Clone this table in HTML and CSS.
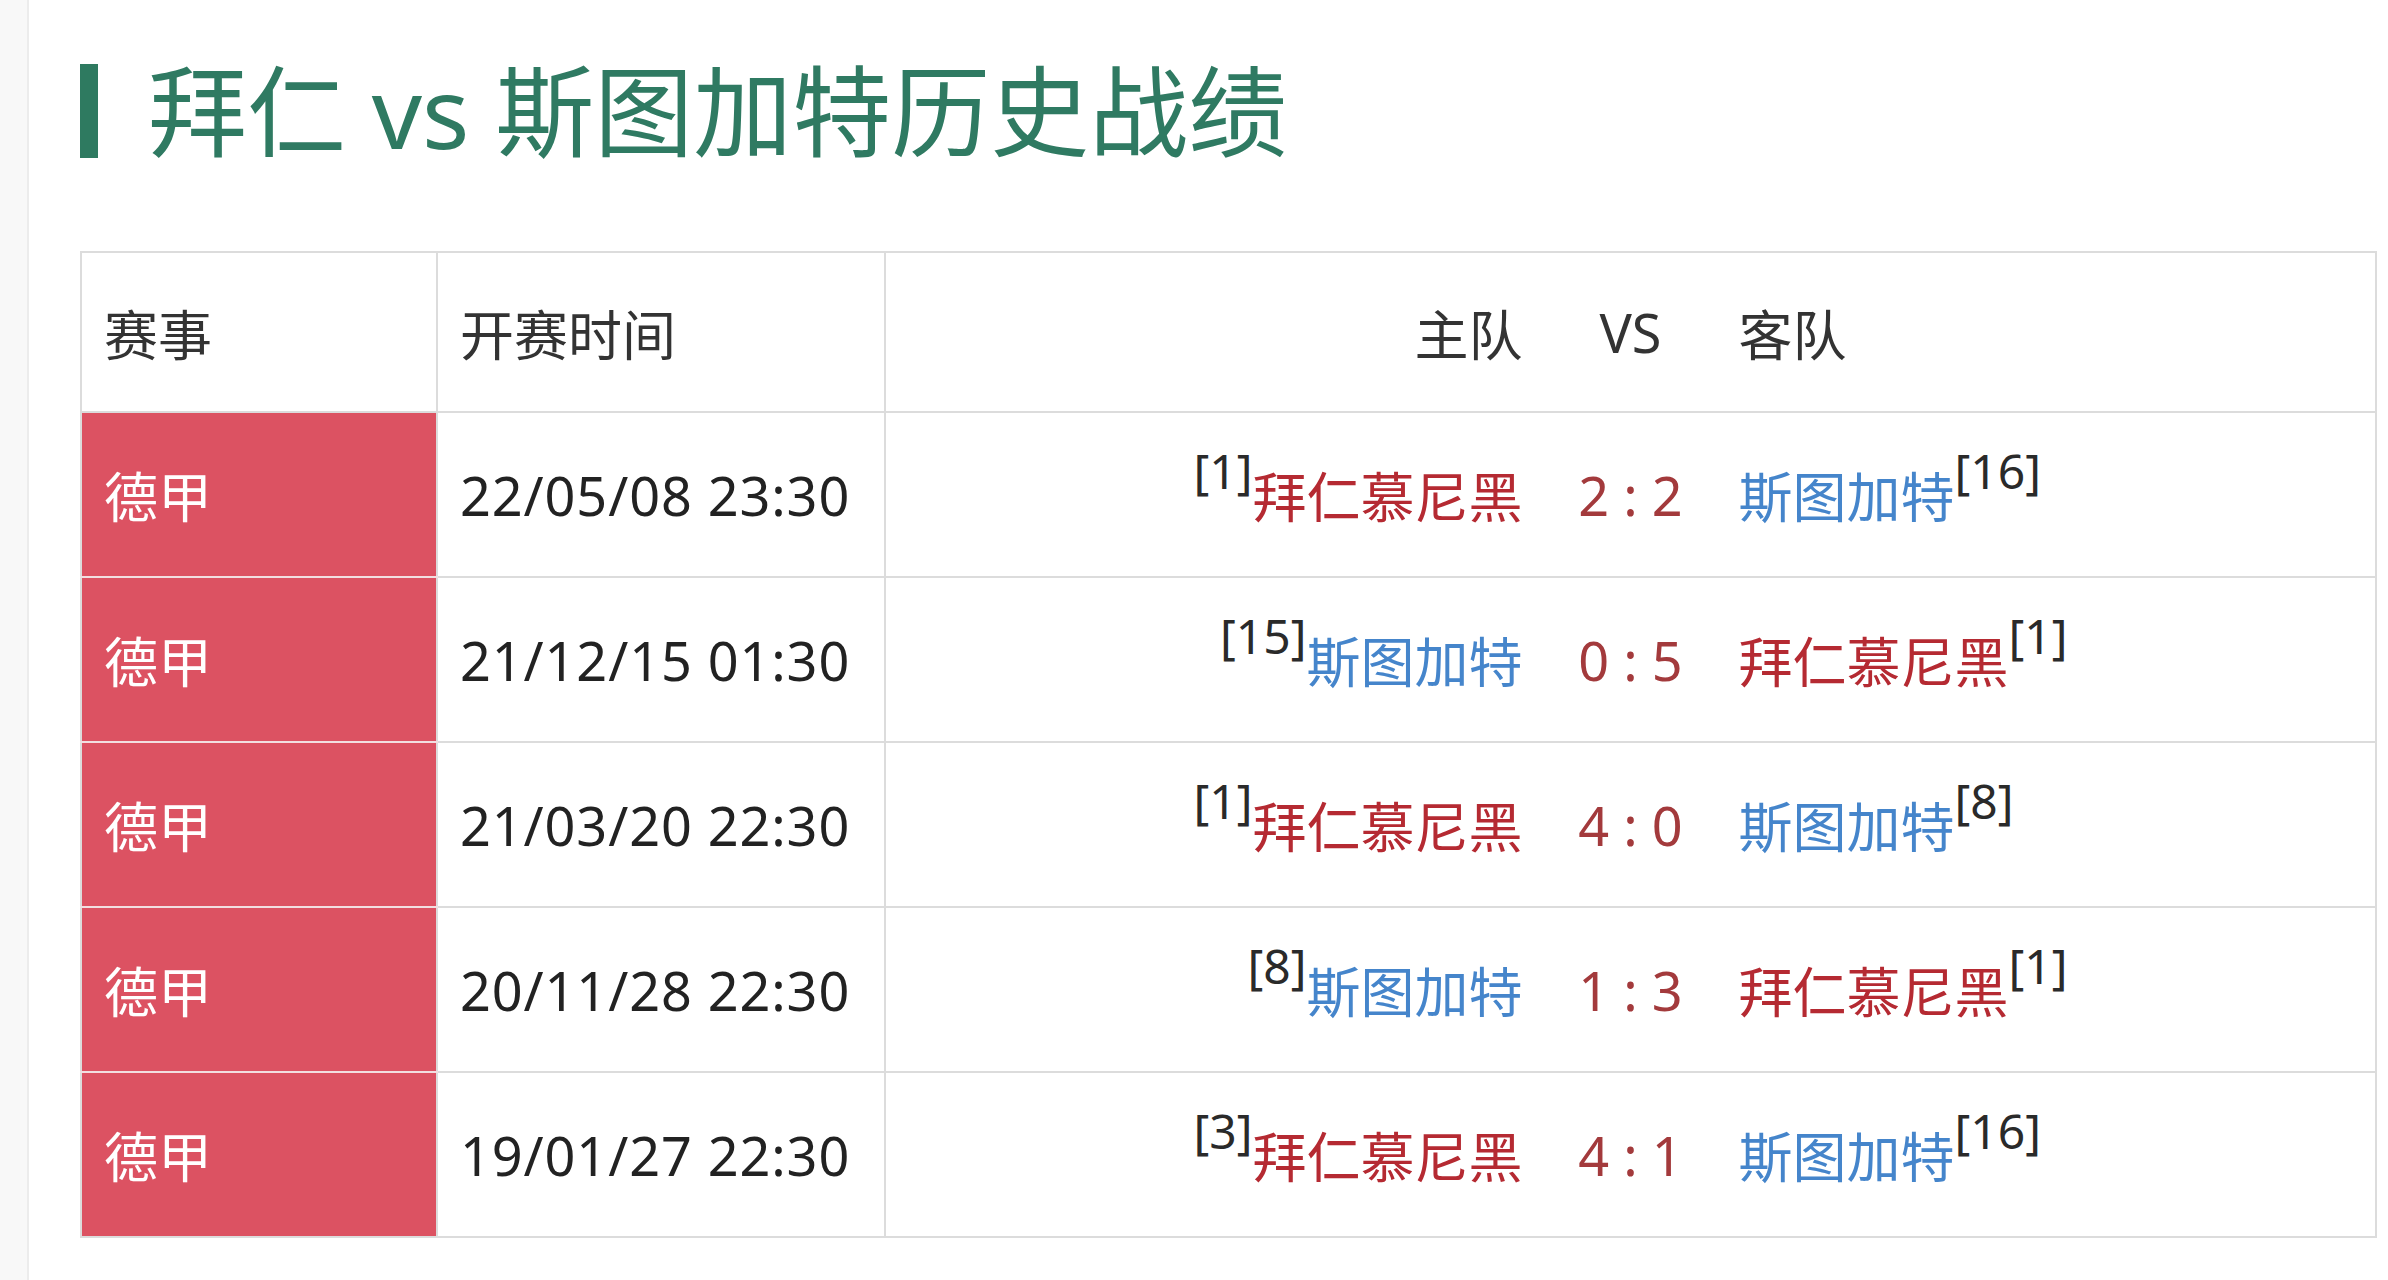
FILE: index.html
```html
<!DOCTYPE html>
<html lang="zh-CN">
<head>
<meta charset="utf-8">
<title>拜仁 vs 斯图加特历史战绩</title>
<link rel="stylesheet" href="styles.css">
</head>
<body>
<div class="page">
  <div class="content">
    <h1 class="title"><span class="title-bar"></span><span class="title-text">拜仁 vs 斯图加特历史战绩</span></h1>
    <table class="records">
      <colgroup>
        <col class="c-league">
        <col class="c-time">
        <col class="c-match">
      </colgroup>
      <thead>
        <tr class="head">
          <th>赛事</th>
          <th>开赛时间</th>
          <th><div class="match"><span class="home">主队</span><span class="score vs">VS</span><span class="away">客队</span></div></th>
        </tr>
      </thead>
      <tbody>
        <tr>
          <td class="league">德甲</td>
          <td class="time">22/05/08 23:30</td>
          <td><div class="match"><span class="home"><sup class="rank">[1]</sup><span class="red">拜仁慕尼黑</span></span><span class="score">2 : 2</span><span class="away"><span class="blue">斯图加特</span><sup class="rank">[16]</sup></span></div></td>
        </tr>
        <tr>
          <td class="league">德甲</td>
          <td class="time">21/12/15 01:30</td>
          <td><div class="match"><span class="home"><sup class="rank">[15]</sup><span class="blue">斯图加特</span></span><span class="score">0 : 5</span><span class="away"><span class="red">拜仁慕尼黑</span><sup class="rank">[1]</sup></span></div></td>
        </tr>
        <tr>
          <td class="league">德甲</td>
          <td class="time">21/03/20 22:30</td>
          <td><div class="match"><span class="home"><sup class="rank">[1]</sup><span class="red">拜仁慕尼黑</span></span><span class="score">4 : 0</span><span class="away"><span class="blue">斯图加特</span><sup class="rank">[8]</sup></span></div></td>
        </tr>
        <tr>
          <td class="league">德甲</td>
          <td class="time">20/11/28 22:30</td>
          <td><div class="match"><span class="home"><sup class="rank">[8]</sup><span class="blue">斯图加特</span></span><span class="score">1 : 3</span><span class="away"><span class="red">拜仁慕尼黑</span><sup class="rank">[1]</sup></span></div></td>
        </tr>
        <tr>
          <td class="league">德甲</td>
          <td class="time">19/01/27 22:30</td>
          <td><div class="match"><span class="home"><sup class="rank">[3]</sup><span class="red">拜仁慕尼黑</span></span><span class="score">4 : 1</span><span class="away"><span class="blue">斯图加特</span><sup class="rank">[16]</sup></span></div></td>
        </tr>
      </tbody>
    </table>
  </div>
</div>
</body>
</html>
```

FILE: styles.css
```css
html, body {
  margin: 0;
  padding: 0;
}

body {
  background: #f8f8f8;
  font-family: "Noto Sans", "Noto Sans CJK SC", sans-serif;
  color: #333333;
}

.page {
  margin-left: 27px;
  border-left: 2px solid #ececec;
  background: #ffffff;
  min-height: 1280px;
}

.content {
  padding-left: 51px;
  padding-top: 63px;
}

.title {
  display: flex;
  align-items: center;
  height: 96px;
  margin: 0 0 92px 0;
  font-weight: 400;
}

.title-bar {
  width: 18px;
  height: 94px;
  background: #2e7a60;
  flex: none;
}

.title-text {
  margin-left: 50px;
  font-size: 99px;
  line-height: 96px;
  color: #2f7a62;
  white-space: nowrap;
}

.records {
  border-collapse: collapse;
  table-layout: fixed;
  width: 2297px;
  font-size: 54px;
  border: 2px solid #dcdcdc;
}

.c-league { width: 356px; }
.c-time { width: 448px; }

.records th,
.records td {
  border: 2px solid #dcdcdc;
  padding: 0 0 0 22px;
  text-align: left;
  font-weight: 400;
  vertical-align: middle;
  white-space: nowrap;
}

.records th:last-child,
.records td:last-child {
  padding: 0;
}

.head {
  height: 160px;
  color: #333333;
}

.records tbody tr {
  height: 165px;
}

.records td.league {
  background: #dc5262;
  color: #ffffff;
  border-bottom-color: #f2dfe1;
}

.records tbody tr:last-child td.league {
  border-bottom-color: #dcdcdc;
}

.time {
  color: #222222;
  letter-spacing: 0.9px;
}

.match {
  display: grid;
  grid-template-columns: 1fr 216px 1fr;
  align-items: center;
}

.home {
  text-align: right;
}

.away {
  text-align: left;
}

.score {
  text-align: center;
  color: #a33a3c;
}

.score.vs {
  color: #333333;
}

.red {
  color: #b52a32;
}

.blue {
  color: #4585cb;
}

.rank {
  font-size: 48px;
  color: #2a2a2a;
  vertical-align: 29px;
  line-height: 0;
}
```
